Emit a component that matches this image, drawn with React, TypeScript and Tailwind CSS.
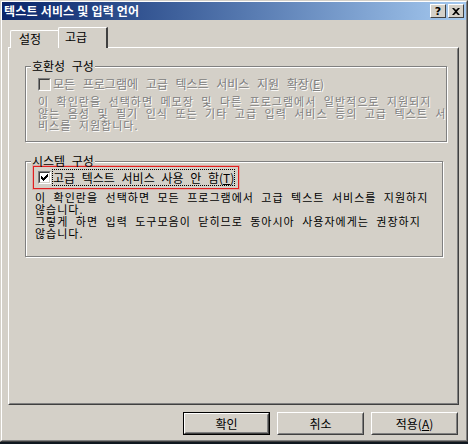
import type { ReactNode } from 'react'

const FONT = { fontFamily: '"Noto Sans CJK KR", "Noto Sans", sans-serif' }

function CheckBox({ checked, disabled }: { checked?: boolean; disabled?: boolean }) {
  return (
    <span className="block w-[13px] h-[13px] shrink-0 border border-t-[#808080] border-l-[#808080] border-r-white border-b-white">
      <span
        className={`flex items-center justify-center w-full h-full border border-t-[#404040] border-l-[#404040] border-r-[#d4d0c8] border-b-[#d4d0c8] ${
          disabled ? 'bg-[#d4d0c8]' : 'bg-white'
        }`}
      >
        {checked && (
          <svg width="7" height="7" viewBox="0 0 7 7">
            <path d="M0 2h1v1h1v1h1V3h1V2h1V1h1V0h1v3H6v1H5v1H4v1H3v1H2V6H1V5H0z" fill="#000" />
          </svg>
        )}
      </span>
    </span>
  )
}

function GroupBox({ title, height, children }: { title: string; height: string; children: ReactNode }) {
  return (
    <fieldset
      className={`${height} border border-[#808080] shadow-[inset_1px_1px_0_#fff,1px_1px_0_#fff]`}
    >
      <legend className="ml-[5px] px-[1px] bg-[#d4d0c8] leading-[14px] text-black [word-spacing:4px]">{title}</legend>
      {children}
    </fieldset>
  )
}

function Button({ children, isDefault }: { children: ReactNode; isDefault?: boolean }) {
  return (
    <div className={`w-[87px] h-[23px] ${isDefault ? 'border border-black' : ''}`}>
      <div className="w-full h-full border border-t-white border-l-white border-r-[#404040] border-b-[#404040]">
        <div className="flex items-center justify-center w-full h-full border border-transparent border-r-[#808080] border-b-[#808080] text-black">
          {children}
        </div>
      </div>
    </div>
  )
}

export default function App() {
  return (
    <div className="w-[468px] h-[444px] bg-[#101820] text-[12px]" style={FONT}>
      <div className="h-[442px] bg-[#d4d0c8] border border-t-[#d4d0c8] border-l-[#d4d0c8] border-r-[#404040] border-b-[#404040]">
        <div className="h-full border border-t-white border-l-white border-r-[#808080] border-b-[#808080] flex flex-col">
          {/* 제목 표시줄 */}
          <div className="h-[18px] flex items-center bg-gradient-to-r from-[#0a246a] to-[#a6caf0] pl-[2px] pr-[2px]">
            <span className="text-white font-bold leading-[18px] tracking-[0.2px]">텍스트 서비스 및 입력 언어</span>
            <div className="ml-auto flex gap-[2px]">
              {['?', '✕'].map((c) => (
                <div
                  key={c}
                  className="w-[16px] h-[14px] bg-[#d4d0c8] border border-t-white border-l-white border-r-[#404040] border-b-[#404040] flex items-center justify-center"
                >
                  {c === '?' ? (
                    <span className="font-bold text-[11px] leading-none text-black" style={{ fontFamily: '"DejaVu Sans", sans-serif' }}>?</span>
                  ) : (
                    <svg width="8" height="7" viewBox="0 0 8 7">
                      <path d="M0 0h2l2 2 2-2h2L5 3.5 8 7H6L4 5 2 7H0l3-3.5z" fill="#000" />
                    </svg>
                  )}
                </div>
              ))}
            </div>
          </div>

          <div className="flex flex-col pl-[6px] pr-[7px]">
            {/* 탭 */}
            <div className="flex items-end h-[21px] mt-[7px] pl-[2px] relative z-10">
              <div className="w-[50px] h-[18px] bg-[#d4d0c8] border-l border-t border-white border-r border-r-[#404040] rounded-tl-[2px] pl-[8px] leading-[16px] text-black">
                설정
              </div>
              <div className="-ml-[2px] w-[50px] h-[21px] bg-[#d4d0c8] border-l border-t border-white border-r-2 border-r-[#404040] rounded-tl-[2px] pl-[6px] leading-[18px] text-black">
                고급
              </div>
            </div>

            {/* 탭 패널 */}
            <div className="-mt-[1px] h-[358px] border border-t-white border-l-white border-r-[#404040] border-b-[#404040]">
              <div className="h-full border border-transparent border-r-[#808080] border-b-[#808080] pl-[15px] pr-[14px] pt-[10px] flex flex-col">
                <GroupBox title="호환성 구성" height="h-[83px]">
                  <div className="flex items-center gap-[2px] pl-[12px] mt-[4px] h-[14px] text-[#808080] [text-shadow:1px_1px_0_#fff]">
                    <CheckBox disabled />
                    <span className="whitespace-nowrap [word-spacing:5px]">
                      모든 프로그램에 고급 텍스트 서비스 지원 확장(<u>E</u>)
                    </span>
                  </div>
                  <p className="pl-[12px] mt-[4px] text-[11px] tracking-[1px] leading-[12px] whitespace-nowrap [word-spacing:4px] text-[#808080] [text-shadow:1px_1px_0_#fff]">
                    이 확인란을 선택하면 메모장 및 다른 프로그램에서 일반적으로 지원되지
                    <br />
                    않는 음성 및 필기 인식 또는 기타 고급 입력 서비스 등의 고급 텍스트 서
                    <br />
                    비스를 지원합니다.
                  </p>
                </GroupBox>

                <div className="mt-[12px]">
                  <GroupBox title="시스템 구성" height="h-[103px]">
                    <div className="ml-[7px] -mt-[2px] w-[206px] h-[23px] border border-[#e02020] shadow-[0_0_0_1px_rgba(235,120,120,0.45)] flex items-center pl-[4px] gap-[2px]">
                      <CheckBox checked />
                      <span className="whitespace-nowrap [word-spacing:4px] outline-1 outline-dotted outline-black leading-[15px] text-black">
                        고급 텍스트 서비스 사용 안 함(<u>T</u>)
                      </span>
                    </div>
                    <p className="pl-[9px] mt-[2px] text-[11px] tracking-[1px] leading-[12px] whitespace-nowrap [word-spacing:4px] text-black">
                      이 확인란을 선택하면 모든 프로그램에서 고급 텍스트 서비스를 지원하지
                      <br />
                      않습니다.
                      <br />
                      그렇게 하면 입력 도구모음이 닫히므로 동아시아 사용자에게는 권장하지
                      <br />
                      않습니다.
                    </p>
                  </GroupBox>
                </div>
              </div>
            </div>

            {/* 버튼 */}
            <div className="flex justify-end gap-[7px] mt-[7px] pr-[1px]">
              <Button isDefault>확인</Button>
              <Button>취소</Button>
              <Button>
                적용(<u>A</u>)
              </Button>
            </div>
          </div>
        </div>
      </div>
    </div>
  )
}
